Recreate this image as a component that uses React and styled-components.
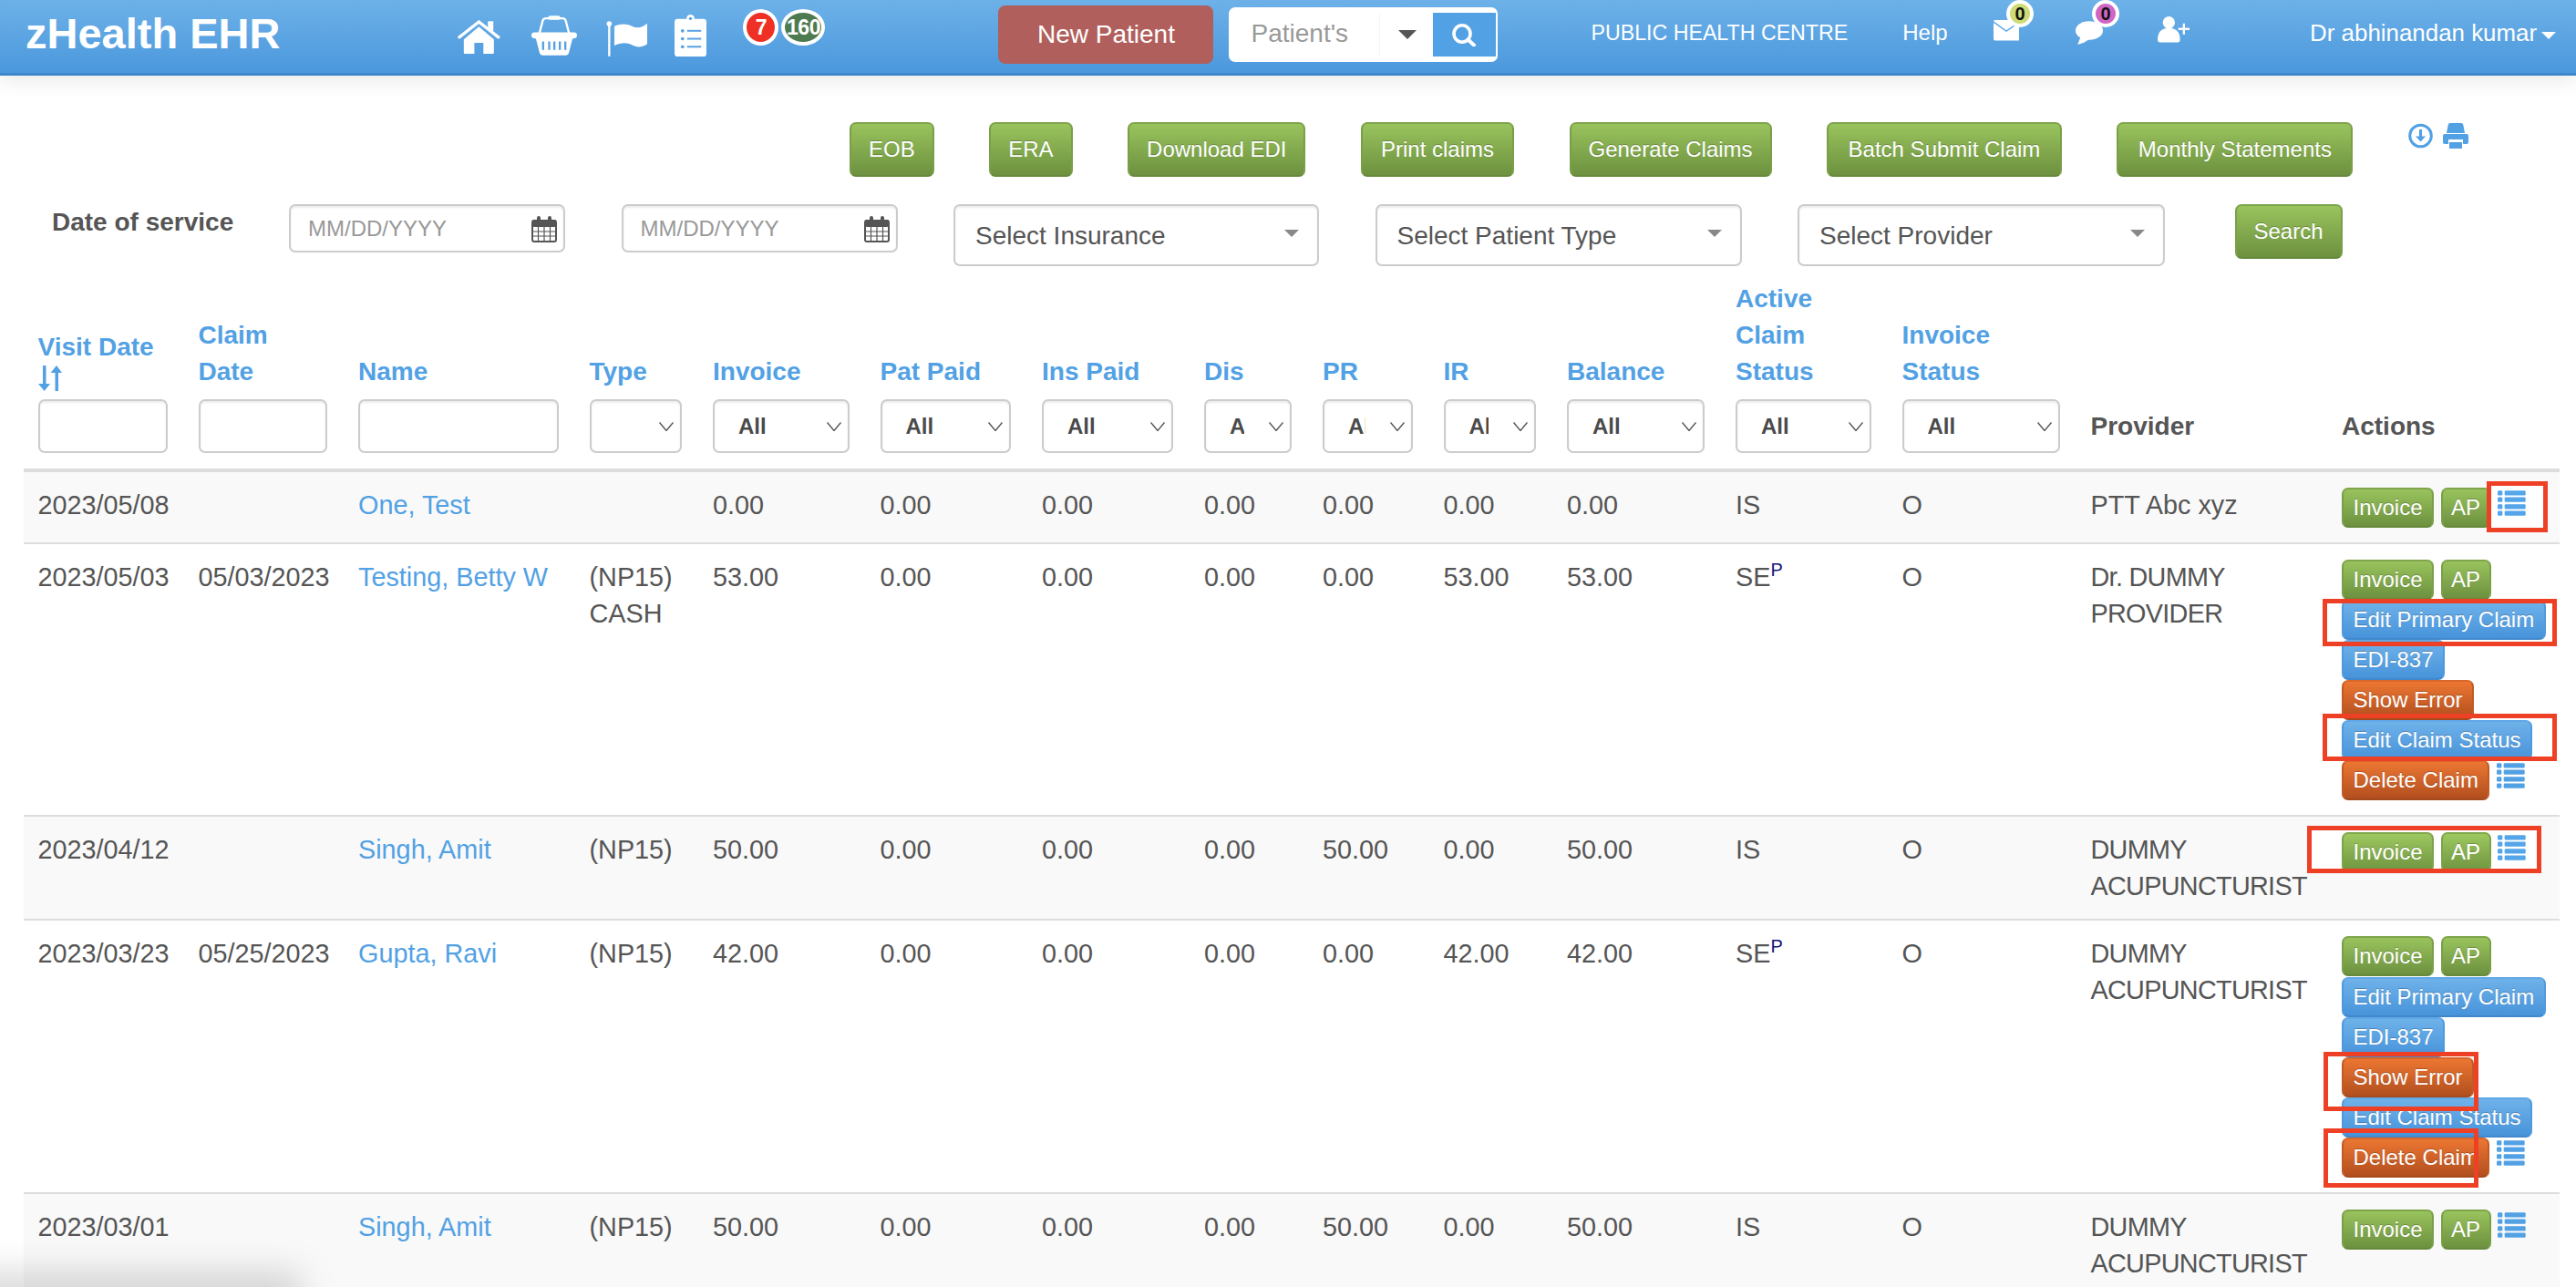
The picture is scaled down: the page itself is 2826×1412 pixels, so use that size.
import React from 'react';
import styled, { createGlobalStyle, css } from 'styled-components';

const GlobalStyle = createGlobalStyle`
  html, body {
    margin: 0;
    height: 100%;
    overflow: hidden;
    background: #fff;
    font-family: "Liberation Sans", Arial, sans-serif;
    color: #555;
  }
  * { box-sizing: border-box; }
`;

const BLUE = '#52a1e4';

const Page = styled.div`
  position: relative;
  width: 2826px;
  height: 1412px;
  overflow: hidden;
`;

/* ---------- top bar ---------- */

const Navbar = styled.header`
  display: flex;
  align-items: flex-start;
  height: 83px;
  padding-left: 28px;
  color: #fff;
  background: linear-gradient(to bottom, #6db1e8, #4b98dd);
  border-bottom: 3px solid #3f87cb;
  box-shadow: 0 4px 22px rgba(0, 0, 0, 0.1);
`;

const Logo = styled.div`
  width: 278px;
  margin-top: 14px;
  font-size: 47px;
  line-height: 46px;
  font-weight: 700;
  white-space: nowrap;
`;

const NavIcon = styled.svg`
  flex: none;
  width: ${p => p.$w}px;
  height: ${p => p.$h}px;
  margin-top: ${p => p.$top}px;
  margin-left: ${p => p.$left}px;
  fill: #fff;
`;

const CountBadge = styled.span`
  flex: none;
  display: flex;
  align-items: center;
  justify-content: center;
  width: ${p => p.$w}px;
  height: 40px;
  margin-top: 10px;
  margin-left: ${p => p.$left}px;
  border: 4px solid #fff;
  border-radius: 50%;
  background: ${p => p.$bg};
  font-size: 23px;
  font-weight: 700;
  letter-spacing: -0.5px;
`;

const NewPatient = styled.button`
  flex: none;
  width: 236px;
  height: 64px;
  margin: 6px 0 0 190px;
  border: 0;
  border-radius: 8px;
  background: #b05f5c;
  color: #fff;
  font: 28px "Liberation Sans", Arial, sans-serif;
`;

const SearchGroup = styled.div`
  flex: none;
  display: flex;
  width: 295px;
  height: 60px;
  margin: 8px 0 0 17px;
  padding: 6px 2px 6px 0;
  border-radius: 7px;
  background: #fff;
`;

const SearchField = styled.div`
  width: 166px;
  padding-left: 24px;
  color: #999;
  font-size: 28px;
  line-height: 46px;
  border-right: 1px solid #f4f4f4;
`;

const SearchCaret = styled.div`
  width: 58px;
  display: flex;
  align-items: center;
  padding-left: 20px;
  &::before {
    content: '';
    border-top: 10px solid #555;
    border-left: 10px solid transparent;
    border-right: 10px solid transparent;
  }
`;

const SearchButton = styled.div`
  flex: 1;
  display: flex;
  align-items: center;
  justify-content: center;
  background: ${BLUE};
`;

const NavText = styled.a`
  flex: none;
  margin-top: 20.5px;
  margin-left: ${p => p.$left}px;
  font-size: ${p => p.$size}px;
  line-height: 30px;
  color: #fff;
  white-space: nowrap;
`;

const Notify = styled.div`
  position: relative;
  flex: none;
  margin-left: ${p => p.$left}px;
  margin-top: ${p => p.$top}px;
  line-height: 0;
`;

const NotifyBadge = styled.span`
  position: absolute;
  top: ${p => p.$top}px;
  left: ${p => p.$left}px;
  display: flex;
  align-items: center;
  justify-content: center;
  width: 30px;
  height: 30px;
  border: 4px solid #fff;
  border-radius: 50%;
  background: ${p => p.$bg};
  color: #111;
  font-size: 20px;
  font-weight: 700;
  line-height: 1;
`;

const UserCaret = styled.span`
  flex: none;
  margin: 35px 0 0 5px;
  border-top: 8px solid #fff;
  border-left: 8px solid transparent;
  border-right: 8px solid transparent;
`;

/* ---------- toolbar and filters ---------- */

const Toolbar = styled.div`
  display: flex;
  align-items: flex-start;
  gap: 60.5px;
  padding: 51px 0 0 932px;
`;

const tones = {
  green: css`
    background: linear-gradient(to bottom, #99c35d, #6d913f);
    border-color: #7fa44b #7a9f48 #668a3b;
  `,
  blue: css`
    background: linear-gradient(to bottom, #6fb2ea, #4793da);
    border-color: #5fa8e6 #4d9adf #4288cc;
  `,
  orange: css`
    background: linear-gradient(to bottom, #ec7632, #b24f1f);
    border-color: #d8672a #c25a24 #a64a1d;
  `,
};

const Button = styled.button`
  flex: none;
  height: ${p => (p.$big ? 60 : 44)}px;
  padding: 0 ${p => p.$pad || 10.5}px;
  border: 2px solid;
  border-radius: 7px;
  color: #fff;
  font: 24px "Liberation Sans", Arial, sans-serif;
  text-shadow: 0 -1px 0 rgba(0, 0, 0, 0.22);
  white-space: nowrap;
  ${p => tones[p.$tone || 'green']}
`;

const ToolIcons = styled.div`
  display: flex;
  gap: 11px;
  padding-top: 1px;
`;

const FilterRow = styled.div`
  display: flex;
  align-items: flex-start;
  gap: 61.5px;
  margin-top: 30px;
  padding-left: 57px;
`;

const FilterLabel = styled.div`
  width: 199px;
  margin-right: -0.5px;
  font-size: 28px;
  line-height: 40px;
  font-weight: 700;
  color: #555;
  white-space: nowrap;
`;

const fieldBox = css`
  border: 2px solid #ccc;
  border-radius: 7px;
  box-shadow: inset 0 2px 2px rgba(0, 0, 0, 0.075);
  background: #fff;
  outline: none;
  font-family: "Liberation Sans", Arial, sans-serif;
`;

const DateField = styled.div`
  position: relative;
  width: 303px;
  height: 53px;
`;

const DateInput = styled.input`
  ${fieldBox}
  width: 100%;
  height: 100%;
  padding-left: 19px;
  font-size: 24px;
  &::placeholder { color: #999; opacity: 1; }
`;

const CalendarIcon = styled.svg`
  position: absolute;
  top: 13px;
  right: 9px;
  width: 28px;
  height: 29px;
`;

const FilterSelect = styled.div`
  position: relative;
  width: ${p => p.$w}px;
  height: 68px;
  &::after {
    content: '';
    position: absolute;
    top: 28px;
    right: 22px;
    border-top: 8px solid #888;
    border-left: 8px solid transparent;
    border-right: 8px solid transparent;
  }
`;

const BigSelect = styled.select`
  ${fieldBox}
  width: 100%;
  height: 100%;
  padding-left: 22px;
  appearance: none;
  color: #555;
  font-size: 28px;
`;

const SearchSubmit = styled(Button)`
  margin-left: 15px;
`;

/* ---------- claims table ---------- */

const TableWrap = styled.div`
  margin: 16px 18px 0 26px;
`;

const Table = styled.table`
  width: 2782px;
  table-layout: fixed;
  border-collapse: separate;
  border-spacing: 0;
`;

const Col = styled.col`
  width: ${p => p.$w}px;
`;

const Th = styled.th`
  padding: 0 18.5px 17px 15.5px;
  vertical-align: bottom;
  text-align: left;
  font-size: 28px;
  line-height: 40px;
  font-weight: 700;
  color: ${p => (p.$plain ? '#555' : BLUE)};
  border-bottom: 4px solid #ddd;
`;

const HeadLabel = styled.div`
  margin-bottom: ${p => p.$gap}px;
`;

const SortIcon = styled.svg`
  display: block;
  width: 26px;
  height: 28px;
  margin-bottom: 9px;
`;

const ColumnInput = styled.input`
  ${fieldBox}
  display: block;
  width: 100%;
  height: 59px;
`;

const ColumnFilter = styled.div`
  position: relative;
  height: 59px;
`;

const ColumnSelect = styled.select`
  ${fieldBox}
  display: block;
  width: 100%;
  height: 100%;
  padding: 0 50px 0 26px;
  appearance: none;
  color: #4a4a4a;
  font-size: 24px;
  font-weight: 700;
`;

const Chevron = styled.svg`
  position: absolute;
  top: 25px;
  right: 9px;
  width: 16px;
  height: 10px;
  fill: none;
  stroke: #555;
  stroke-width: 1.4;
`;

const Tr = styled.tr`
  background: ${p => (p.$odd ? '#f9f9f9' : '#fff')};
`;

const Td = styled.td`
  padding: 16px 18.5px 16px 15.5px;
  vertical-align: top;
  font-size: 28.8px;
  line-height: 40px;
  color: #555;
  letter-spacing: ${p => (p.$tight ? '-0.7px' : 'normal')};
  border-bottom: 2px solid #ddd;
`;

const NameLink = styled.a`
  color: ${BLUE};
`;

const StatusMark = styled.sup`
  color: #15157a;
  font-size: 20px;
  line-height: 0;
`;

const ActionCell = styled.td`
  padding: 17px 0 16px 15.5px;
  vertical-align: top;
  border-bottom: 2px solid #ddd;
`;

const Actions = styled.div`
  display: flex;
  flex-wrap: wrap;
  align-items: flex-start;
  gap: 0.1px 7.5px;
`;

const ListIcon = styled.svg`
  flex: none;
  width: 30.7px;
  height: 28px;
  margin-top: 3px;
  fill: ${BLUE};
`;

/* annotations drawn on top of the screenshot */
const Highlight = styled.div`
  position: absolute;
  left: ${p => p.$x}px;
  top: ${p => p.$y}px;
  width: ${p => p.$w}px;
  height: ${p => p.$h}px;
  border: 5px solid #ee4024;
  ${p => p.$lift && 'backdrop-filter: brightness(1.025);'}
`;

const WindowShadow = styled.div`
  position: absolute;
  left: -70px;
  bottom: -40px;
  width: 400px;
  height: 58px;
  background: rgba(0, 0, 0, 0.14);
  filter: blur(18px);
  pointer-events: none;
`;

/* ---------- drawings ---------- */

const HomeIcon = () => (
  <NavIcon $w={46.7} $h={37} $top={22} $left={196} viewBox="0 0 140 112">
    <rect x="100" y="4" width="18" height="32" />
    <path d="M20 64 70 22l50 42v44a4 4 0 0 1-4 4H85V76H55v36H24a4 4 0 0 1-4-4z" />
    <path d="M5 57 70 6l65 51" fill="none" stroke="#fff" strokeWidth="10" strokeLinecap="round" />
  </NavIcon>
);

const BasketIcon = () => (
  <NavIcon $w={50} $h={45} $top={16} $left={34.8} viewBox="0 0 150 134">
    <path d="M26 62 37 20q2-8 10-8h56q8 0 10 8l11 42" fill="none" stroke="#fff" strokeWidth="7" />
    <rect x="55" y="3" width="40" height="14" rx="6" />
    <rect x="0" y="58" width="150" height="20" rx="10" />
    <path
      fillRule="evenodd"
      d="M14 76h122l-13 50q-2 8-10 8H37q-8 0-10-8zM35 88v28h7V88zM55 88v28h7V88zM72 88v28h7V88zM90 88v28h7V88zM108 88v28h7V88z"
    />
  </NavIcon>
);

const FlagIcon = () => (
  <NavIcon $w={45} $h={39} $top={23} $left={32} viewBox="0 0 135 117">
    <circle cx="10" cy="9" r="8.5" />
    <rect x="6.5" y="9" width="7" height="108" rx="3" />
    <path d="M27 17c22-10 42-8 58 0s32 6 50-9v68c-16 12-34 12-50 3s-36-9-58 2z" />
  </NavIcon>
);

const ClipboardIcon = () => (
  <NavIcon $w={35} $h={46} $top={16} $left={30} viewBox="0 0 104 137">
    <rect x="0" y="14" width="104" height="123" rx="10" />
    <circle cx="52" cy="13" r="13" />
    <circle cx="52" cy="13" r="5" fill={BLUE} />
    <g fill="#58a2e3">
      <circle cx="26" cy="53" r="5.5" />
      <circle cx="26" cy="79" r="5.5" />
      <circle cx="26" cy="105" r="5.5" />
      <rect x="41" y="50" width="46" height="6" />
      <rect x="41" y="76" width="46" height="6" />
      <rect x="41" y="102" width="46" height="6" />
    </g>
  </NavIcon>
);

const MagnifierIcon = () => (
  <svg width="27" height="25" viewBox="0 0 27 25" fill="none" stroke="#fff">
    <ellipse cx="11" cy="11" rx="9" ry="9.2" strokeWidth="3.6" />
    <path d="M17.5 17.5 24 23.5" strokeWidth="4" strokeLinecap="round" />
  </svg>
);

const MailIcon = () => (
  <svg width="28.5" height="22.5" viewBox="0 0 85 67">
    <rect width="85" height="67" rx="5" fill="#fff" />
    <path d="M-2 5 42 36 87 5" fill="none" stroke="#5aa5e6" strokeWidth="4" />
  </svg>
);

const ChatIcon = () => (
  <svg width="30" height="26" viewBox="0 0 90 77" fill="#fff">
    <ellipse cx="45" cy="31" rx="45" ry="31" />
    <path d="M18 48 7 77c16-3 30-10 38-18z" />
  </svg>
);

const AddUserIcon = () => (
  <svg width="35" height="28.5" viewBox="0 0 105 85" fill="#fff">
    <circle cx="37" cy="20" r="20" />
    <path d="M0 76c0-26 15-38 37-38s37 12 37 38q0 9-9 9H9q-9 0-9-9z" />
    <path d="M68 37.500h37v7H68z" />
    <path d="M83 23h7v36h-7z" />
  </svg>
);

const DownloadIcon = () => (
  <svg width="27" height="28" viewBox="0 0 27 28" fill="none" stroke={BLUE}>
    <circle cx="13.5" cy="14" r="11.8" strokeWidth="3" />
    <path d="M13.5 7v12" strokeWidth="3" />
    <path d="M8 14.500l5.500 6 5.500-6z" fill={BLUE} strokeWidth="0" />
  </svg>
);

const PrintIcon = () => (
  <svg width="28" height="28" viewBox="0 0 28 28" fill={BLUE}>
    <path d="M8 0h12q2 0 2.300 2L24 11H4L5.700 2Q6 0 8 0z" />
    <rect x="0" y="12" width="28" height="11" rx="2" />
    <rect x="6" y="18" width="16" height="10" fill="#fff" />
    <rect x="7" y="21" width="14" height="7" />
  </svg>
);

const Calendar = () => (
  <CalendarIcon viewBox="0 0 28 29">
    <rect x="1" y="5" width="26" height="23" rx="2" fill="#fff" stroke="#555" strokeWidth="2" />
    <rect x="1" y="4" width="26" height="8" rx="2" fill="#555" />
    <rect x="6" y="0" width="4" height="8" rx="2" fill="#555" />
    <rect x="18" y="0" width="4" height="8" rx="2" fill="#555" />
    <path d="M2 17h24M2 22h24M7.500 12v15M14 12v15M20.500 12v15" stroke="#555" strokeWidth="1.2" />
  </CalendarIcon>
);

const SortArrows = () => (
  <SortIcon viewBox="0 0 26 28" fill={BLUE}>
    <path d="M5 0h3.500v20H13L6.700 28 0 20h5z" />
    <path d="M18.500 28h3.500V8h4L20 0l-6.500 8h5z" />
  </SortIcon>
);

const RowListIcon = () => (
  <ListIcon viewBox="0 0 92 83">
    {[0, 22, 45, 67].map(y => (
      <g key={y}>
        <rect x="0" y={y} width="16" height="16" rx="4" />
        <rect x="23" y={y} width="69" height="16" rx="4" />
      </g>
    ))}
  </ListIcon>
);

const ColumnChoice = ({ value }) => (
  <ColumnFilter>
    <ColumnSelect defaultValue={value}>
      <option value="">{''}</option>
      <option value="All">All</option>
    </ColumnSelect>
    <Chevron viewBox="0 0 16 10">
      <path d="M0.500 0.500 8 9.500l7.500-9" />
    </Chevron>
  </ColumnFilter>
);

/* ---------- data ---------- */

const widths = [176, 175.5, 253.5, 135.5, 183.5, 177.5, 178, 130, 132.500, 135.5, 185, 182.5, 207, 275.5, 254.5];

const columns = [
  { label: 'Visit Date', sort: true, input: true },
  { label: 'Claim Date', input: true },
  { label: 'Name', input: true },
  { label: 'Type', value: '' },
  { label: 'Invoice', value: 'All' },
  { label: 'Pat Paid', value: 'All' },
  { label: 'Ins Paid', value: 'All' },
  { label: 'Dis', value: 'All' },
  { label: 'PR', value: 'All' },
  { label: 'IR', value: 'All' },
  { label: 'Balance', value: 'All' },
  { label: 'Active Claim Status', value: 'All' },
  { label: 'Invoice Status', value: 'All' },
  { label: 'Provider', plain: true },
  { label: 'Actions', plain: true },
];

const rows = [
  { visit: '2023/05/08', claim: '', name: 'One, Test', type: '', nums: ['0.00', '0.00', '0.00', '0.00', '0.00', '0.00', '0.00'], status: 'IS', provider: 'PTT Abc xyz' },
  { visit: '2023/05/03', claim: '05/03/2023', name: 'Testing, Betty W', type: '(NP15) CASH', nums: ['53.00', '0.00', '0.00', '0.00', '0.00', '53.00', '53.00'], status: 'SE', primary: true, provider: 'Dr. DUMMY PROVIDER' },
  { visit: '2023/04/12', claim: '', name: 'Singh, Amit', type: '(NP15)', nums: ['50.00', '0.00', '0.00', '0.00', '50.00', '0.00', '50.00'], status: 'IS', provider: 'DUMMY ACUPUNCTURIST' },
  { visit: '2023/03/23', claim: '05/25/2023', name: 'Gupta, Ravi', type: '(NP15)', nums: ['42.00', '0.00', '0.00', '0.00', '0.00', '42.00', '42.00'], status: 'SE', primary: true, provider: 'DUMMY ACUPUNCTURIST' },
  { visit: '2023/03/01', claim: '', name: 'Singh, Amit', type: '(NP15)', nums: ['50.00', '0.00', '0.00', '0.00', '50.00', '0.00', '50.00'], status: 'IS', provider: 'DUMMY ACUPUNCTURIST' },
];

const highlights = [
  { x: 2728, y: 528, w: 67, h: 56, lift: true },
  { x: 2548, y: 657, w: 257, h: 52 },
  { x: 2548, y: 783, w: 257, h: 52 },
  { x: 2531, y: 906, w: 257, h: 52, lift: true },
  { x: 2549, y: 1154, w: 170, h: 65 },
  { x: 2549, y: 1238, w: 170, h: 65 },
];

const toolButtons = [
  { label: 'EOB', pad: 19 },
  { label: 'ERA', pad: 19 },
  { label: 'Download EDI', pad: 19 },
  { label: 'Print claims', pad: 20 },
  { label: 'Generate Claims', pad: 19 },
  { label: 'Batch Submit Claim', pad: 21.5 },
  { label: 'Monthly Statements', pad: 21.5 },
];

const headGap = col => (col.sort ? 0 : col.plain ? 9 : 10);

export default function App() {
  return (
    <Page>
      <GlobalStyle />
      <Navbar>
        <Logo>zHealth EHR</Logo>
        <HomeIcon />
        <BasketIcon />
        <FlagIcon />
        <ClipboardIcon />
        <CountBadge $w={39} $bg="#ee3124" $left={40}>7</CountBadge>
        <CountBadge $w={48} $bg="#4e7a50" $left={3}>160</CountBadge>
        <NewPatient>New Patient</NewPatient>
        <SearchGroup>
          <SearchField>Patient's</SearchField>
          <SearchCaret />
          <SearchButton>
            <MagnifierIcon />
          </SearchButton>
        </SearchGroup>
        <NavText $left={102} $size={23.2}>PUBLIC HEALTH CENTRE</NavText>
        <NavText $left={60} $size={24}>Help</NavText>
        <Notify $left={50} $top={22}>
          <MailIcon />
          <NotifyBadge $bg="#cddc74" $top={-22} $left={14.500}>0</NotifyBadge>
        </Notify>
        <Notify $left={62} $top={23}>
          <ChatIcon />
          <NotifyBadge $bg="#d066c4" $top={-23} $left={18}>0</NotifyBadge>
        </Notify>
        <Notify $left={60} $top={18}>
          <AddUserIcon />
        </Notify>
        <NavText $left={132} $size={25.9}>Dr abhinandan kumar</NavText>
        <UserCaret />
      </Navbar>

      <Toolbar>
        {toolButtons.map(b => (
          <Button key={b.label} $big $pad={b.pad}>{b.label}</Button>
        ))}
        <ToolIcons>
          <DownloadIcon />
          <PrintIcon />
        </ToolIcons>
      </Toolbar>

      <FilterRow>
        <FilterLabel>Date of service</FilterLabel>
        <DateField>
          <DateInput placeholder="MM/DD/YYYY" />
          <Calendar />
        </DateField>
        <DateField>
          <DateInput placeholder="MM/DD/YYYY" />
          <Calendar />
        </DateField>
        <FilterSelect $w={401}>
          <BigSelect><option>Select Insurance</option></BigSelect>
        </FilterSelect>
        <FilterSelect $w={402}>
          <BigSelect><option>Select Patient Type</option></BigSelect>
        </FilterSelect>
        <FilterSelect $w={403}>
          <BigSelect><option>Select Provider</option></BigSelect>
        </FilterSelect>
        <SearchSubmit $big $pad={19}>Search</SearchSubmit>
      </FilterRow>

      <TableWrap>
        <Table>
          <colgroup>
            {widths.map((w, i) => <Col key={i} $w={w} />)}
          </colgroup>
          <thead>
            <tr>
              {columns.map(col => (
                <Th key={col.label} $plain={col.plain}>
                  <HeadLabel $gap={headGap(col)}>{col.label}</HeadLabel>
                  {col.sort && <SortArrows />}
                  {col.input && <ColumnInput />}
                  {col.value !== undefined && <ColumnChoice value={col.value} />}
                </Th>
              ))}
            </tr>
          </thead>
          <tbody>
            {rows.map((row, i) => (
              <Tr key={row.visit} $odd={i % 2 === 0}>
                <Td>{row.visit}</Td>
                <Td>{row.claim}</Td>
                <Td><NameLink>{row.name}</NameLink></Td>
                <Td>{row.type}</Td>
                {row.nums.map((n, j) => <Td key={j}>{n}</Td>)}
                <Td>
                  {row.status}
                  {row.primary && <StatusMark>P</StatusMark>}
                </Td>
                <Td>O</Td>
                <Td $tight={row.provider !== 'PTT Abc xyz'}>{row.provider}</Td>
                <ActionCell>
                  <Actions>
                    <Button>Invoice</Button>
                    <Button $pad={9.5}>AP</Button>
                    {row.primary && (
                      <>
                        <Button $tone="blue">Edit Primary Claim</Button>
                        <Button $tone="blue">EDI-837</Button>
                        <Button $tone="orange">Show Error</Button>
                        <Button $tone="blue">Edit Claim Status</Button>
                        <Button $tone="orange">Delete Claim</Button>
                      </>
                    )}
                    <RowListIcon />
                  </Actions>
                </ActionCell>
              </Tr>
            ))}
          </tbody>
        </Table>
      </TableWrap>

      {highlights.map(h => (
        <Highlight key={`${h.x}-${h.y}`} $x={h.x} $y={h.y} $w={h.w} $h={h.h} $lift={h.lift} />
      ))}
      <WindowShadow />
    </Page>
  );
}
